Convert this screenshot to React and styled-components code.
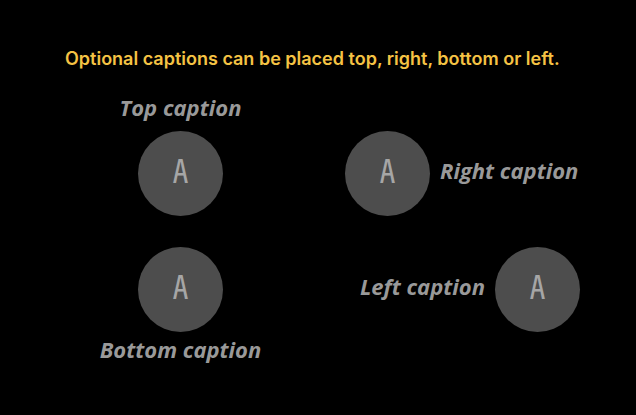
import React from "react";
import styled, { createGlobalStyle } from "styled-components";

const GlobalStyle = createGlobalStyle`
  * { box-sizing: border-box; }
  body { margin: 0; background: #000; }
`;

const Page = styled.main`
  min-height: 100vh;
  padding: 47px 56px 47px 63px;
  background: #000;
`;

const Heading = styled.h1`
  margin: 0 0 24px 2px;
  color: #f5c344;
  font: 600 18px/24px Inter, sans-serif;
  white-space: nowrap;
`;

const Grid = styled.div`
  display: grid;
  grid-template-columns: 1fr 1fr;
  gap: 31px 47px;
`;

const directions = {
  top: "column-reverse",
  bottom: "column",
  right: "row",
  left: "row-reverse",
};

const places = {
  top: "end center",
  bottom: "start center",
  right: "end start",
  left: "start end",
};

const Item = styled.div`
  display: flex;
  flex-direction: ${({ $side }) => directions[$side]};
  align-items: center;
  gap: ${({ $side }) => ($side === "bottom" ? 5 : 10)}px;
  place-self: ${({ $side }) => places[$side]};
`;

const RoundButton = styled.button`
  flex: none;
  width: 85px;
  height: 85px;
  padding: 0 0 10px;
  border: 0;
  border-radius: 50%;
  background: #4d4d4d;
  color: #a6a6a6;
  font: 400 32px/32px "Noto Sans Mono CJK SC", "DejaVu Sans Mono", monospace;
  cursor: pointer;
`;

const Caption = styled.label`
  padding-bottom: ${({ $side }) => ($side === "top" ? 2 : 8)}px;
  color: #999;
  font: italic 700 22px/24px "Open Sans", sans-serif;
  white-space: nowrap;
`;

const items = [
  { side: "top", caption: "Top caption" },
  { side: "right", caption: "Right caption" },
  { side: "bottom", caption: "Bottom caption" },
  { side: "left", caption: "Left caption" },
];

export default function App() {
  return (
    <>
      <GlobalStyle />
      <Page>
        <Heading>Optional captions can be placed top, right, bottom or left.</Heading>
        <Grid>
          {items.map(({ side, caption }) => (
            <Item key={side} $side={side}>
              <RoundButton id={`button-${side}`} type="button">A</RoundButton>
              <Caption $side={side} htmlFor={`button-${side}`}>{caption}</Caption>
            </Item>
          ))}
        </Grid>
      </Page>
    </>
  );
}
